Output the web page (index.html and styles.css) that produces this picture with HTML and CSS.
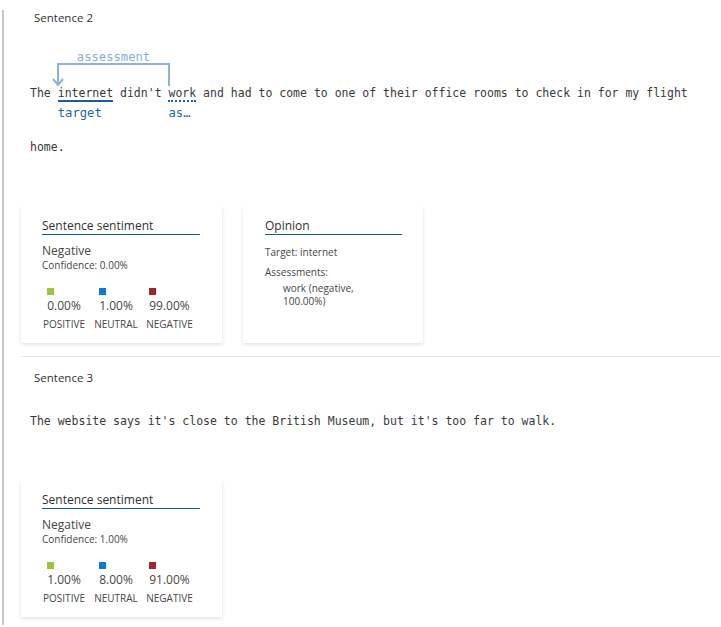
FILE: index.html
```html
<!DOCTYPE html>
<html lang="en">
<head>
<meta charset="utf-8">
<title>Sentiment results</title>
<link rel="stylesheet" href="styles.css">
</head>
<body>
<div class="results">
  <section class="sentence">
    <div class="sentence-title">Sentence 2</div>
    <div class="text annotated">
      <svg class="arrow" width="160" height="60" viewBox="0 0 160 60" aria-hidden="true">
        <path d="M37 51 V30 H148 V52" fill="none" stroke="#8db3da" stroke-width="2"/>
        <path d="M32 45 L37 51 L42 45" fill="none" stroke="#8db3da" stroke-width="2"/>
      </svg>
      <span class="arrow-label">assessment</span>
      The <span class="tok target">internet<span class="tag">target</span></span> didn't <span class="tok assess">work<span class="tag">assessment</span></span> and had to come to one of their office rooms to check in for my flight home.
    </div>
    <div class="cards">
      <div class="card sentiment">
        <div class="card-title">Sentence sentiment</div>
        <div class="big">Negative</div>
        <div class="small">Confidence: 0.00%</div>
        <div class="scores">
          <div class="score"><div class="score-val"><div class="sq pos"></div><div class="pct">0.00%</div></div><div class="score-label">Positive</div></div>
          <div class="score"><div class="score-val"><div class="sq neu"></div><div class="pct">1.00%</div></div><div class="score-label">Neutral</div></div>
          <div class="score"><div class="score-val"><div class="sq neg"></div><div class="pct">99.00%</div></div><div class="score-label">Negative</div></div>
        </div>
      </div>
      <div class="card opinion">
        <div class="card-title">Opinion</div>
        <div class="small target-line">Target: internet</div>
        <div class="small assess-head">Assessments:</div>
        <div class="small assess-item">work (negative, 100.00%)</div>
      </div>
    </div>
  </section>
  <section class="sentence">
    <div class="sentence-title">Sentence 3</div>
    <div class="text">The website says it's close to the British Museum, but it's too far to walk.</div>
    <div class="cards">
      <div class="card sentiment">
        <div class="card-title">Sentence sentiment</div>
        <div class="big">Negative</div>
        <div class="small">Confidence: 1.00%</div>
        <div class="scores">
          <div class="score"><div class="score-val"><div class="sq pos"></div><div class="pct">1.00%</div></div><div class="score-label">Positive</div></div>
          <div class="score"><div class="score-val"><div class="sq neu"></div><div class="pct">8.00%</div></div><div class="score-label">Neutral</div></div>
          <div class="score"><div class="score-val"><div class="sq neg"></div><div class="pct">91.00%</div></div><div class="score-label">Negative</div></div>
        </div>
      </div>
    </div>
  </section>
</div>
</body>
</html>
```

FILE: styles.css
```css
* { box-sizing: border-box; }
body {
  margin: 0;
  font-family: "Open Sans", "Segoe UI", sans-serif;
  color: #323130;
  background: #fff;
}
.results {
  margin: 10px 1px 0 2px;
  border-left: 2px solid #c8c8c8;
  padding: 0 0 8px 17px;
}
.sentence + .sentence {
  margin-top: 13px;
  padding-top: 13px;
  border-top: 1px solid #e8e8e8;
}
.sentence-title {
  padding-left: 13px;
  font-size: 11.5px;
  line-height: 15px;
  color: #323130;
}
.text {
  position: relative;
  margin-top: 9px;
  padding-left: 9px;
  font-family: "DejaVu Sans Mono", monospace;
  font-size: 11.5px;
  line-height: 54px;
  color: #3a3a3a;
}
.text.annotated { padding-top: 32px; }
.arrow {
  position: absolute;
  left: 0;
  top: 0;
}
.arrow-label {
  position: absolute;
  left: 37px;
  top: 16px;
  width: 111px;
  text-align: center;
  font-size: 12.2px;
  line-height: 14px;
  color: #88aed6;
}
.tok { position: relative; }
.tok.target { border-bottom: 2px solid #1a5c9c; }
.tok.assess { border-bottom: 2px dotted #1a5c9c; }
.tag {
  position: absolute;
  left: 0;
  right: 0;
  top: 100%;
  margin-top: 6px;
  font-size: 12.2px;
  line-height: 14px;
  color: #2466a8;
  white-space: nowrap;
  overflow: hidden;
  text-overflow: ellipsis;
}
.cards {
  display: flex;
  gap: 21px;
  margin-top: 32px;
}
.card {
  height: 137px;
  background: #fff;
  box-shadow: 0 1.6px 3.6px rgba(0,0,0,0.13), 0 0.3px 0.9px rgba(0,0,0,0.11);
  padding: 12px 22px 0 21px;
}
.card.sentiment { width: 201px; }
.card.opinion { width: 180px; padding-left: 22px; padding-right: 21px; }
.card-title {
  font-size: 12px;
  line-height: 16px;
  color: #323130;
  border-bottom: 1px solid #0f5c9e;
}
.big {
  margin-top: 8px;
  font-size: 12px;
  line-height: 16px;
  color: #484644;
}
.small {
  font-size: 10px;
  line-height: 13px;
  color: #484644;
}
.scores {
  display: grid;
  grid-template-columns: 44px 44px 47px;
  column-gap: 8px;
  margin-top: 15.5px;
}
.score {
  display: flex;
  flex-direction: column;
  align-items: center;
}
.sq { width: 7px; height: 7px; }
.sq.pos { background: #9bc43b; }
.sq.neu { background: #0f78d4; }
.sq.neg { background: #a4262c; }
.pct {
  margin-top: 3.5px;
  font-size: 12px;
  line-height: 16px;
  color: #484644;
}
.score-label {
  margin-top: 4px;
  font-size: 10px;
  line-height: 13px;
  text-transform: uppercase;
  white-space: nowrap;
  color: #484644;
}
.target-line { margin-top: 10.5px; }
.assess-head { margin-top: 7px; }
.assess-item {
  margin-top: 3px;
  padding-left: 18px;
  width: 102px;
}
```
